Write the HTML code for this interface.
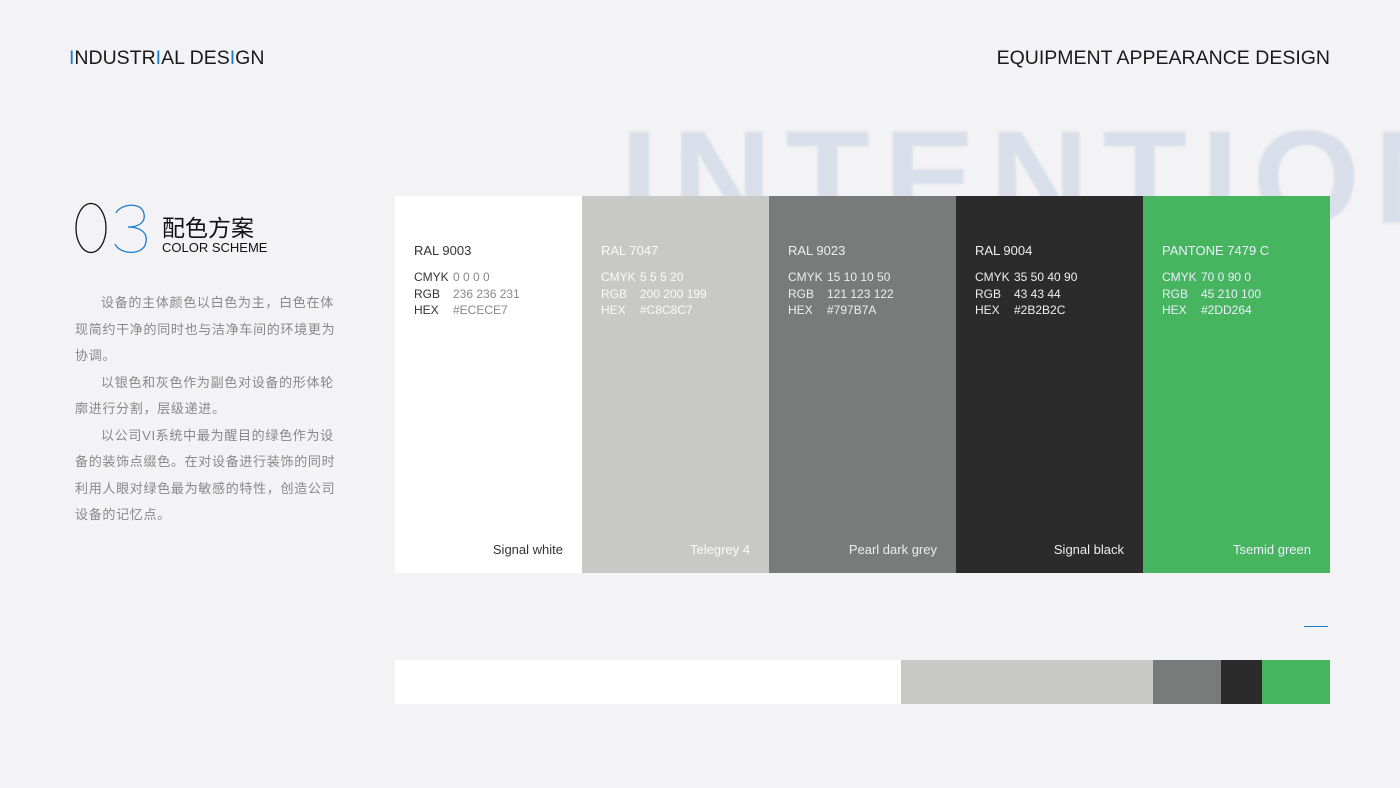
<!DOCTYPE html>
<html><head><meta charset="utf-8"><style>
*{margin:0;padding:0;box-sizing:border-box}
html,body{width:1400px;height:788px;overflow:hidden}
body{background:#f3f3f5;position:relative;font-family:"Liberation Sans","Noto Sans CJK SC",sans-serif;color:#222}
.abs{position:absolute}
.wmw{left:0;top:0;width:1400px;height:788px;overflow:hidden}
.wm{left:620px;top:112px;font-size:133px;font-weight:bold;color:#d8dfea;letter-spacing:13px;white-space:nowrap;line-height:1;filter:blur(1px);transform:scaleX(1.04);transform-origin:left}
.hdr{font-size:19.5px;top:47px;color:#1a1a1a}
.b{color:#1a7cd0}
.col{top:196px;width:187px;height:377px;font-size:12px}
.col .t{position:absolute;left:19px;top:47px;font-size:13px}
.col .r{position:absolute;left:19px;top:73px;font-size:12px;line-height:16.5px}
.col .r div span:first-child{display:inline-block;width:39px}
.col .n{position:absolute;right:19px;bottom:16px;font-size:13px}
.txt{left:75px;top:290px;width:264px;font-size:13px;line-height:26.5px;color:#888;text-indent:26px;letter-spacing:0.7px}
</style></head><body>
<div class="abs wmw"><div class="abs wm">INTENTION</div></div>
<div class="abs hdr" style="left:69px"><span class="b">I</span>NDUSTR<span class="b">I</span>AL DES<span class="b">I</span>GN</div>
<div class="abs hdr" style="right:70px">EQUIPMENT APPEARANCE DESIGN</div>
<svg class="abs" style="left:70px;top:198px" width="85" height="60" viewBox="0 0 85 60">
<ellipse cx="21" cy="30" rx="15" ry="24.5" fill="none" stroke="#111" stroke-width="1.3"/>
<path d="M46 15 C50 6 72 3 74 16 C76 26 66 29 58 29 C68 29 78 33 76 44 C74 58 50 57 45 46" fill="none" stroke="#1a7cd0" stroke-width="1.3"/>
</svg>
<div class="abs" style="left:162px;top:209px;font-size:23px;color:#111">配色方案</div>
<div class="abs" style="left:162px;top:240px;font-size:13px;color:#111">COLOR SCHEME</div>
<div class="abs txt"><p>设备的主体颜色以白色为主，白色在体现简约干净的同时也与洁净车间的环境更为协调。</p><p>以银色和灰色作为副色对设备的形体轮廓进行分割，层级递进。</p><p>以公司VI系统中最为醒目的绿色作为设备的装饰点缀色。在对设备进行装饰的同时利用人眼对绿色最为敏感的特性，创造公司设备的记忆点。</p></div>

<div class="abs col" style="left:395px;background:#fff;color:#333"><div class="t">RAL 9003</div><div class="r"><div><span>CMYK</span><span style="color:#888">0 0 0 0</span></div><div><span>RGB</span><span style="color:#888">236 236 231</span></div><div><span>HEX</span><span style="color:#888">#ECECE7</span></div></div><div class="n">Signal white</div></div>
<div class="abs col" style="left:582px;background:#c8c8c7;color:#fafafa"><div class="t">RAL 7047</div><div class="r"><div><span>CMYK</span><span>5 5 5 20</span></div><div><span>RGB</span><span>200 200 199</span></div><div><span>HEX</span><span>#C8C8C7</span></div></div><div class="n">Telegrey 4</div></div>
<div class="abs col" style="left:769px;background:#797b7a;color:#eee"><div class="t">RAL 9023</div><div class="r"><div><span>CMYK</span><span>15 10 10 50</span></div><div><span>RGB</span><span>121 123 122</span></div><div><span>HEX</span><span>#797B7A</span></div></div><div class="n">Pearl dark grey</div></div>
<div class="abs col" style="left:956px;background:#2b2b2c;color:#eee"><div class="t">RAL 9004</div><div class="r"><div><span>CMYK</span><span>35 50 40 90</span></div><div><span>RGB</span><span>43 43 44</span></div><div><span>HEX</span><span>#2B2B2C</span></div></div><div class="n">Signal black</div></div>
<div class="abs col" style="left:1143px;background:#47b560;color:#eef"><div class="t">PANTONE 7479 C</div><div class="r"><div><span>CMYK</span><span>70 0 90 0</span></div><div><span>RGB</span><span>45 210 100</span></div><div><span>HEX</span><span>#2DD264</span></div></div><div class="n">Tsemid green</div></div>

<div class="abs" style="left:1304px;top:626px;width:24px;height:1px;background:#1a7cd0"></div>
<div class="abs" style="left:395px;top:660px;height:44px;width:506px;background:#fff"></div>
<div class="abs" style="left:901px;top:660px;height:44px;width:252px;background:#c8c8c7"></div>
<div class="abs" style="left:1153px;top:660px;height:44px;width:68px;background:#797b7a"></div>
<div class="abs" style="left:1221px;top:660px;height:44px;width:41px;background:#2b2b2c"></div>
<div class="abs" style="left:1262px;top:660px;height:44px;width:68px;background:#47b560"></div>
</body></html>
